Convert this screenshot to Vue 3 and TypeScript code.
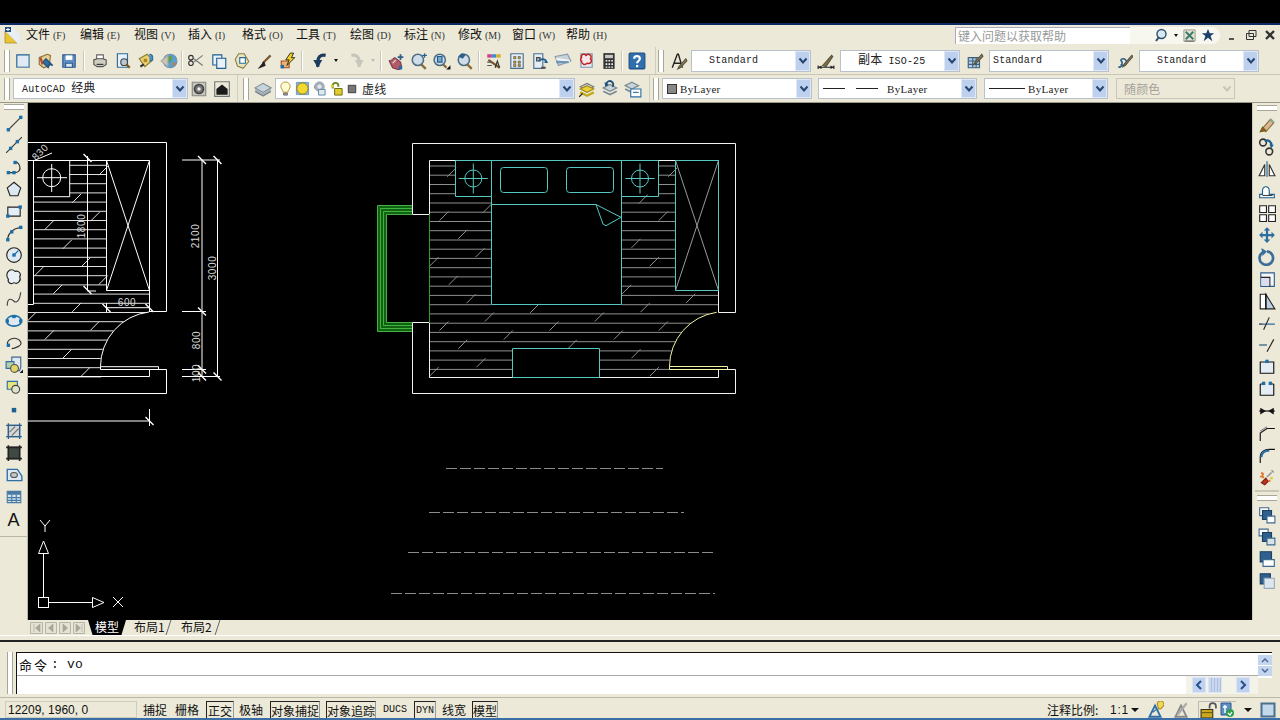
<script setup lang="ts">
interface Shape { d: string; f: string; s: string; w: number }
const P = (d: string, f = 'none', s = '#222', w = 1): Shape => ({ d, f, s, w })
const n = (x: number, y: number): Shape => P(`M${x - 1.5} ${y - 1.5}h3v3h-3z`, '#1b6ea8', 'none')
const BL = '#1d5f91'
const icons: Record<string, Shape[]> = {
  newf: [P('M2.5 2.5h11v11h-11z', '#dfeaf4', BL), P('M2.5 13.5h11v-11', 'none', '#7f9fb8')],
  open: [P('M2 5l7-3 3 1-1 9-5 2-4-3z', '#e6cf92', '#8a7340'), P('M8 6l-3 3 5 5 1-3 3 1z', '#2d6fa6', '#1d4f7a'), P('M3 5l2 6', 'none', '#b6492f', 2)],
  save: [P('M2.5 2.5h11v11h-11z', '#5f8fc4', '#2c5b8f'), P('M5 3h6v4H5z', '#fff', 'none'), P('M5 10h6v3.5H5z', '#dfe6ee', '#2c5b8f')],
  print: [P('M5 2.5h6v4H5z', '#fff', '#666'), P('M2.5 7l3-1h5l3 1v4l-3 2h-5l-3-2z', '#cfcdc2', '#555'), P('M5 11h6', 'none', '#333')],
  preview: [P('M3 1.5h9v12H3z', '#e8f0f8', '#2b6a9a'), P('M6 9a3 3 0 1 0 6 0a3 3 0 1 0-6 0', '#b8c8d4', '#444'), P('M11 11l3 3', 'none', '#7a5a20', 2)],
  publish: [P('M2 6l7-4 5 5-7 6z', '#ead070', '#8a7a30'), P('M6 6h3v3H6z', '#b08a20', 'none'), P('M11 2a3 3 0 1 1 0 6', '#4a8fc8', '#2d6fa6'), P('M3 13l3-2', 'none', '#333', 2)],
  globe: [P('M3 8a6 6 0 1 0 12 0a6 6 0 1 0-12 0', '#5b9fd0', '#6a8fb0'), P('M7 3l4 1-1 4-3 2-2-3z', '#5aa050', 'none'), P('M1 8l6-5v10z', '#c9c7ba', '#aaa'), P('M11 9l3 1-2 3z', '#d27a30', 'none')],
  cut: [P('M14 3L6 9M14 12L6 6', 'none', '#777'), P('M1.5 5a2 2 0 1 0 4 0a2 2 0 1 0-4 0M1.5 10a2 2 0 1 0 4 0a2 2 0 1 0-4 0', 'none', '#333')],
  copy: [P('M2.5 2.5h8v9h-8z', '#e8f0f8', BL), P('M6 5.5h8v9H6z', '#e8f0f8', BL)],
  paste: [P('M5 1.5l5 0 4 7-5 6-5-2-2-6z', '#e8e4c0', '#8a8040'), P('M6 5h5v5H6z', '#fff', '#2b6a9a')],
  brush: [P('M13 3L6 10', 'none', '#7a5a30', 2), P('M7 9l-4 5 5-2z', '#222', '#222')],
  block: [P('M2 8h7v6H2z', '#efb070', '#a05020'), P('M10 1L6 7h3l-2 5 7-7h-3l2-4z', '#f2d020', '#222', 0.8), n(3, 13)],
  undo: [P('M13 3C8 2 6 5 6 9v4', 'none', '#1d3c5c', 3), P('M2 7h8l-4 7z', '#1d3c5c', 'none')],
  redo: [P('M3 3c5-1 7 2 7 6v4', 'none', '#c6c6bc', 3), P('M14 7H6l4 7z', '#c6c6bc', 'none')],
  hand: [P('M2 8l5-3 5 4 1 4-2 3-6-2z', '#b25a68', '#7a3a4a'), P('M3 7l2-2M5 10l3-3', 'none', '#ddd'), P('M12 2v5M9.5 4.5h5', 'none', '#2d5f8a', 1.6), n(12, 14)],
  zoomp: [P('M2 7a5 5 0 1 0 10 0a5 5 0 1 0-10 0', '#cfdde8', '#4f6f86', 1.4), P('M10 11l4 4', 'none', '#8a6a3a', 2), P('M11 3h4M13 1v4', 'none', BL)],
  zoomw: [P('M1 7a5 5 0 1 0 10 0a5 5 0 1 0-10 0', '#cfdde8', '#4f6f86', 1.4), P('M4 4h4v5H4z', '#7ea6c6', BL), P('M9 11l3 3', 'none', '#8a6a3a', 2), P('M13 15h2v-2z', '#111', '#111')],
  zoomr: [P('M2 7a5 5 0 1 0 10 0a5 5 0 1 0-10 0', '#cfdde8', '#4f6f86', 1.4), P('M10 11l4 4', 'none', '#8a6a3a', 2), P('M2 4l3-3 4 1-3 4z', '#2d5f8a', 'none')],
  props: [P('M2 2h4v3H2z', '#d03a8a', 'none'), P('M6 2h4v3H6z', '#3a8ad0', 'none'), P('M10 2h4v3h-4z', '#d8b030', 'none'), P('M3 7l10 7', 'none', '#7a5a30', 2), P('M2 9h4M2 12h4', 'none', '#555'), P('M9 14l2-6 2 6', 'none', '#333')],
  grid: [P('M2.5 1.5h11v13h-11z', '#e6eef5', '#4a6f8f'), P('M5 4h2v2H5zM9 4h2v2H9zM5 8h2v2H5zM9 8h2v2H9zM5 11h2v2H5zM9 11h2v2H9z', '#c9a030', '#444', 0.5)],
  tools: [P('M2.5 1.5h8v13h-8z', '#e6eef5', '#4a6f8f'), P('M5 5h3v3H5z', '#bbb', '#444'), P('M7 8a4 4 0 0 1 7 1l-2 0', 'none', BL, 1.5), P('M9 13h4v2H9z', '#555', 'none')],
  sheets: [P('M1 4l11-2 3 6-11 4z', '#c4d2dc', '#8a9ba8'), P('M2 6l12 2', 'none', '#f4f4f4', 2), P('M2 9h11', 'none', '#6f97b5', 2)],
  markup: [P('M3.5 1.5h10v12h-10z', '#e8eef4', '#7b95ad'), P('M4 5c-1-3 3-4 4-2 2-2 6 0 4 3 2 2 0 5-3 4-2 2-5 1-5-2-1 0-1-2 0-3z', '#f4e8e8', '#c02020', 1.3)],
  calc: [P('M3 1h10v14H3z', '#333', 'none'), P('M4.5 2.5h7v3h-7z', '#c8c8c0', 'none'), P('M5 7h1.5v1.5H5zM7.5 7H9v1.5H7.5zM10 7h1.5v1.5H10zM5 10h1.5v1.5H5zM7.5 10H9v1.5H7.5zM10 10h1.5v1.5H10zM5 12.8h1.5v1.2H5zM7.5 12.8H9v1.2H7.5zM10 12.8h1.5v1.2H10z', '#eee', 'none')],
  help: [P('M2 1h12a1 1 0 0 1 1 1v12a1 1 0 0 1-1 1H2a1 1 0 0 1-1-1V2a1 1 0 0 1 1-1z', '#2f6fae', '#1c4f85'), P('M5.5 6c0-3 5-3 5 0 0 2-2.4 2-2.4 4M8.1 11.5v2', 'none', '#fff', 2)],
  txt: [P('M2 14L6.5 2h1L11 14M4 10h6', 'none', '#222', 1.2), P('M14 6l-6 7-1 2 2-1 6-6z', '#a08050', '#554')],
  dim: [P('M1 12v3M15 12v3M1 13.5h14', 'none', '#222'), P('M5 12l8-9 1 1-6 9z', '#8a6a40', '#554'), P('M1 13.5l3-1.5v3zM15 13.5l-3-1.5v3z', '#222', 'none')],
  table: [P('M2 5h10v9H2z', '#b8cfe2', '#3a5f80'), P('M2 8h10M2 11h10M6 5v9M9 5v9', 'none', '#3a5f80'), P('M14 2L8 9l-1 2 2-1 6-6z', '#a08050', '#554')],
  mlstyle: [P('M5 7a3 3 0 1 1 0 4M3 13c2 2 5-3 2-6', 'none', '#2a5f8a', 1.4), P('M15 3L8 11l-1 2 2-1 7-8z', '#a08050', '#554')],
  workspace: [P('M2 2h12v12H2z', '#c7c6bb', '#888'), P('M4 8a4 4 0 1 0 8 0a4 4 0 1 0-8 0', '#777', '#444', 1.5), P('M6.5 8a1.5 1.5 0 1 0 3 0a1.5 1.5 0 1 0-3 0', '#eee', 'none')],
  clean: [P('M1.5 1.5h13v13h-13z', 'none', '#777', 1), P('M3 8l5-4 5 4v5H3z', '#1a1a1a', 'none')],
  layers: [P('M1 7l7-4 7 4-7 4z', '#c8d4dc', '#7d8a94'), P('M1 10l7 4 7-4', 'none', '#7d8a94', 1.5), P('M1 8.5l7 4 7-4', 'none', '#9aa8b2')],
  bulb: [P('M3 6a5 5 0 1 1 10 0c0 2-2 3-2.5 6h-5C5 9 3 8 3 6z', '#fffbd0', '#b09030'), P('M6 13h4v2H6z', '#aaa', '#666')],
  sun: [P('M1.5 1.5h13v13h-13z', '#8cb6d6', '#6a9ac0'), P('M2 8a6 6 0 1 0 12 0a6 6 0 1 0-12 0', '#f4d832', '#8a7a20')],
  lockg: [P('M2 5h3v3H2z', '#aaa', 'none'), P('M3 6a5 5 0 1 1 10 0a5 5 0 1 1-10 0', '#b2b9c4', '#8e97a4'), P('M5 6a3 3 0 1 0 6 0a3 3 0 1 0-6 0', '#e4e8ee', '#8e97a4'), P('M7 9h7v6H7z', '#dfe8f0', '#5f88a8')],
  lock: [P('M4 8V5a3 3 0 0 1 6 0v1', 'none', '#6a8a20', 2), P('M6 8h8v7H6z', '#e0cc30', '#6a6a10'), P('M2 4h3v3H2z', '#e0cc30', 'none')],
  square: [P('M3 3h10v10H3z', '#777', '#222')],
  lstate: [P('M2 6l6-3 6 3-6 3z', '#dbe0e4', '#777'), P('M2 8l6 3 6-3-6-3z', '#eccf3a', '#a08a18'), P('M2 11l6 3 6-3', 'none', '#c4a820', 2), P('M1 15l3-3', 'none', '#222')],
  lprev: [P('M2 7l6-3 6 3-6 3z', '#c8d4dc', '#7d8a94'), P('M2 10l6 3 6-3', 'none', '#7d8a94', 1.5), P('M10 6a3 3 0 1 0-5-1', 'none', '#1d4f7a', 1.6), P('M3 2l1 4 3-2z', '#1d4f7a', 'none')],
  lprop: [P('M1 5l6-3 6 3-6 3z', '#c8d4dc', '#7d8a94'), P('M1 8l6 3', 'none', '#7d8a94', 1.5), P('M6 8h9v7H6z', '#fff', '#2d6fa6'), P('M8 11h5', 'none', '#2d6fa6')],
  line: [P('M3 14L14 3', 'none', '#444'), n(3, 14), n(14, 3)],
  xline: [P('M1 15L15 1', 'none', '#333'), n(5, 11), n(11, 5)],
  pline: [P('M2 13h6c5 0 6-3 5-6s-3-4-5-3', 'none', '#333'), n(3, 13), n(8, 13), n(9, 4)],
  poly: [P('M8 2l6 5-2.5 7h-7L2 7z', '#dce8f2', '#222')],
  rect: [P('M2.5 4.5h11v8h-11z', '#e4eef6', '#222'), n(2.5, 12.5), n(13.5, 4.5)],
  arc: [P('M2 14c1-6 5-10 12-11', 'none', '#333'), n(2.5, 14), n(14, 3), n(6, 7)],
  circle: [P('M1.5 8a6.5 6.5 0 1 0 13 0a6.5 6.5 0 1 0-13 0', '#dfe9f2', '#222'), P('M8 8l4-4', 'none', '#1b6ea8'), n(8, 8)],
  cloud: [P('M4 2c2-1 4 0 5 1 3-1 6 2 4 5 2 3-2 7-5 5-3 2-6 0-5-3-2-2-2-6 1-8z', '#e8eff5', '#222')],
  spline: [P('M2 14c0-8 4-6 6-4s5 0 6-8', 'none', '#444')],
  ellipse: [P('M1.5 8c0-6 13-6 13 0s-13 6-13 0z', '#dfe9f2', '#1b6ea8', 1.6), n(2, 8), n(14, 8), n(8, 4)],
  earc: [P('M3 11C0 6 6 3 10 4s6 5 2 7-5 2-6 2', 'none', '#333'), n(3, 10)],
  insert: [P('M6 1h8v9l-1 3H6z', '#dfe8f0', '#3f6a8f'), P('M1 5h7v6H1z', '#b7d0a8', '#2d6fa6'), P('M5 11a3.5 3.5 0 1 0 7 0a3.5 3.5 0 1 0-7 0', '#e4d46a', '#555'), P('M13 15h3v-3z', '#111', 'none')],
  mkblock: [P('M2 3h9v7H2z', '#e6e47c', '#2d6fa6'), P('M6 10a3.5 3.5 0 1 0 7 0a3.5 3.5 0 1 0-7 0', '#dfe2cc', '#444')],
  point: [P('M6 7h4v4H6z', BL, 'none')],
  hatch: [P('M3 3h10v10H3z', '#d7d7d7', '#2d5f8a'), P('M3 1v14M13 1v14M1 3h14M1 13h14', 'none', '#2d5f8a', 1.2), P('M4 9l5-5M6 12l6-6', 'none', '#777')],
  grad: [P('M3 3h10v10H3z', '#3e4a42', '#222'), P('M3 1v14M13 1v14M1 3h14M1 13h14', 'none', '#222', 1.4)],
  region: [P('M2 3h9l4 6v4H2z', '#dde8f1', '#2d6fa6', 1.2), P('M5 8c0-3 6-3 6 0s-6 3-6 0z', '#c3c6c4', '#555')],
  tbl: [P('M2 3h12v10H2z', '#d4e2ee', '#4a7ba3'), P('M2 3h12v3H2z', '#4a7ba3', 'none'), P('M2 8.5h12M2 11h12M6 6v7M10 6v7', 'none', '#4a7ba3')],
  erase: [P('M4 11l7-8 3 3-7 8z', '#d8b890', '#8a6a40'), P('M2 14l2-4 3 3z', '#c04040', '#661'), P('M11 3l3 3', 'none', '#8a8', 2)],
  copyo: [P('M1.5 4a3 3 0 1 0 6 0 3 3 0 1 0-6 0M7 12a3 3 0 1 0 6 0 3 3 0 1 0-6 0', 'none', '#333', 1.4), P('M6 3c3-2 6 0 6 4', 'none', BL, 2), P('M10 6h4l-2 3z', BL, 'none')],
  mirror: [P('M8 1v14', 'none', BL), P('M6 4v10H1zM10 4v10h5z', '#fff', '#333')],
  offset: [P('M1.5 14h13v-3H10V8c0-5-6-5-6 0v3H1.500z', '#fff', BL), P('M4 12h9', 'none', '#444')],
  array: [P('M1.500 1.500h6v6h-6zM9.500 1.500h6v6h-6zM1.500 9.500h6v6h-6zM9.500 9.500h6v6h-6z', '#fff', '#222')],
  move: [P('M8 1l3 3H9v3h3V5l3 3-3 3V9H9v3h2l-3 3-3-3h2V9H4v2L1 8l3-3v2h3V4H5z', '#2d6f9f', 'none')],
  rotate: [P('M4 4a6 6 0 1 0 4-1', 'none', '#3a6f9a', 2.4), P('M3 0l1 7 4-4z', '#3a6f9a', 'none')],
  scale: [P('M2.500 2.500h12v12h-12z', '#f4f6f8', '#2d5f8a'), P('M2.500 6.500h8v8', 'none', '#111', 1), P('M3 7h7v7H3z', '#dde', 'none')],
  stretch: [P('M2 2h5v13H2z', '#fff', '#222'), P('M7 2l8 13H7z', '#bcd0e0', '#222'), P('M7 2v13', 'none', '#111')],
  trim: [P('M1 9l14 0', 'none', BL), P('M5 14L10 3', 'none', '#222'), P('M1 9h3', 'none', '#555')],
  extend: [P('M1 8h7', 'none', '#1d4f7a'), P('M8 14L14 3', 'none', '#222')],
  brk: [P('M2 3.500h12v10H2z', '#e4edf4', '#111'), n(8, 3)],
  brk1: [P('M2 3.500h3M11 3.500h3M2 3.500v10h12v-10', '#e4edf4', '#111'), n(5, 3), n(11, 3)],
  join: [P('M1 8h14', 'none', '#111'), P('M2 5l5 3-5 3zM14 5L9 8l5 3z', '#111', 'none')],
  chamfer: [P('M2 15V8l6-4h7', 'none', '#111'), P('M2 6.500l6-4', 'none', '#888')],
  fillet: [P('M2 15V10c0-5 4-7 8-7h5', 'none', '#111'), P('M3 10c0-4 3-6 7-6', 'none', '#2d6fa6', 2)],
  explode: [P('M3 13l4-4 2 3-3 3z', '#c03020', '#7a2010'), P('M8 8l4-4M12 2l2 2', 'none', '#999', 1.5), P('M2 8l2-1 1 2M9 12l2-1M3 4l2 2', 'none', '#e07020', 1.6), P('M11 8h2v2h-2z', '#e8c020', 'none')],
  ord1: [P('M1.500 1.500h8v7h-8z', '#fff', '#3f6a8f'), P('M4 4h8v8H4z', '#2f5f8f', '#1c3f60'), P('M8 9h7v6H8z', '#fff', '#3f6a8f')],
  ord2: [P('M1 1h8v6H1z', '#fff', '#3f6a8f'), P('M4 4h8v8H4z', '#2f5f8f', '#1c3f60'), P('M8 9h7v6H8z', '#d8e0e8', '#3f6a8f')],
  ord3: [P('M2 1.500h10v9H2z', '#2f5f8f', '#1c3f60'), P('M4.500 8.500h10v6h-10z', '#fff', '#3f6a8f')],
  ord4: [P('M2 1.500h9v9H2z', '#2f5f8f', '#1c3f60'), P('M5.500 5.500h9v9h-9z', '#dde6ee', '#9ab')],
  mag: [P('M3 7a4.500 4.500 0 1 0 9 0a4.500 4.500 0 1 0-9 0', '#d8e8f2', '#2d4f6a', 1.4), P('M5 10l-3 4', 'none', '#2d4f6a', 2)],
  sat: [P('M2 2h12v12H2z', '#e4e2d2', '#9a9a8a'), P('M4 4l8 8M12 4l-8 8', 'none', '#3a7a6a', 2), P('M3 14h10', 'none', '#555')],
  star: [P('M8 1l2 5h5l-4 3 2 6-5-4-5 4 2-6-4-3h5z', '#1f3f6a', 'none')],
  anno: [P('M8 4l5 10H3z', 'none', '#2d6fa6', 1.6), P('M6 10l4-3', 'none', '#2d6fa6'), P('M10 2a3 3 0 1 1 5 3l-2 2h-2z', '#f0d850', '#b09030')],
  anno2: [P('M8 4l5 10H3z', 'none', '#888', 1.6), P('M5 12l8-10', 'none', '#aaa', 2)],
  lockgold: [P('M9 6V4a3 3 0 0 1 6 0v2', 'none', '#555', 1.6), P('M1 7h11v8H1z', '#c8a820', '#3a3010'), P('M1 10h11', 'none', '#6a5810')],
  toolcheck: [P('M2 1h10v12H2z', '#5f8fc0', '#2c5b8f'), P('M6 3v8M4 5h4', 'none', '#fff', 1.4), P('M7 11a4 4 0 1 0 8 0a4 4 0 1 0-8 0', '#2f9f4f', 'none'), P('M9 11l2 2 2-3', 'none', '#fff', 1.2)],
  clean2: [P('M1.500 1.500h13v13h-13z', '#c4d8ec', '#4a6f8f', 2)]
}

interface Item { k: 'i' | 's' | 'd' | 'c' | 'h'; w: number; name?: string; text?: string; pre?: string; post?: string; pad?: number; dis?: boolean; sample?: string }
const i = (name: string, w = 23): Item => ({ k: 'i', w, name })
const s = (w: number): Item => ({ k: 's', w })
const sp = (w: number): Item => ({ k: 'h', w })
const d = (g = false): Item => ({ k: 'd', w: 10, name: g ? 'g' : 'b' })
const c = (w: number, text: string, o: Partial<Item> = {}): Item => ({ k: 'c', w, text, ...o })

const row1a: Item[] = [i('newf'), i('open'), i('save'), s(8), i('print'), i('preview'), i('publish'), i('globe'), s(4),
  i('cut'), i('copy'), i('paste'), i('brush'), i('block'), s(6), sp(3), i('undo'), d(), sp(4), i('redo'), d(true), s(6),
  i('hand'), i('zoomp'), i('zoomw'), i('zoomr'), s(6), i('props'), i('grid'), i('tools'), i('sheets'), i('markup'), i('calc'), s(5), i('help')]
const row1b: Item[] = [i('txt', 24), c(120, 'Standard', { pad: 17 }), i('dim', 29), c(120, ' ISO-25', { pre: '副本', pad: 17 }), i('table', 29), c(120, 'Standard', { pad: 3 }), i('mlstyle', 30), c(120, 'Standard', { pad: 17 })]
const row2a: Item[] = [c(175, 'AutoCAD ', { post: '经典', pad: 8 }), i('workspace', 22), i('clean', 24)]
const row2c: Item[] = [i('lstate', 23), i('lprev', 23), i('lprop', 23)]
const row2d: Item[] = [c(150, 'ByLayer', { sample: 'sq', pad: 3 }), sp(6), c(159, 'ByLayer', { sample: 'dash', pad: 3 }), sp(7), c(124, 'ByLayer', { sample: 'line', pad: 3 }), sp(8), c(119, '随颜色', { dis: true, pad: 7 })]

const leftIcons = ['line', 'xline', 'pline', 'poly', 'rect', 'arc', 'circle', 'cloud', 'spline', 'ellipse', 'earc', 'insert', 'mkblock', 'point', 'hatch', 'grad', 'region', 'tbl']
const rightA = ['erase', 'copyo', 'mirror', 'offset', 'array', 'move', 'rotate', 'scale', 'stretch', 'trim', 'extend', 'brk', 'brk1', 'join', 'chamfer', 'fillet', 'explode']
const rightB = ['ord1', 'ord2', 'ord3', 'ord4']

const menus = [['文件', 'F'], ['编辑', 'E'], ['视图', 'V'], ['插入', 'I'], ['格式', 'O'], ['工具', 'T'], ['绘图', 'D'], ['标注', 'N'], ['修改', 'M'], ['窗口', 'W'], ['帮助', 'H']]
const statusBtns = [
  { t: '捕捉', w: 26, on: false, g: 6 }, { t: '栅格', w: 26, on: false, g: 6 }, { t: '正交', w: 28, on: true, g: 4 }, { t: '极轴', w: 26, on: false, g: 6 },
  { t: '对象捕捉', w: 50, on: true, g: 6 }, { t: '对象追踪', w: 50, on: true, g: 6 }, { t: 'DUCS', w: 26, on: false, g: 6 }, { t: 'DYN', w: 22, on: true, g: 5 },
  { t: '线宽', w: 26, on: false, g: 5 }, { t: '模型', w: 26, on: true, g: 0 }
]

// ---- drawing ----
const MID_YS = Array.from({ length: 23 }, (_, k) => 166 + k * 9.245)
const arcX = (y: number, cx: number): number => (y < 312.3 ? cx : cx + 5.7 - Math.sqrt(Math.max(0, 54.9 * 54.9 - (y - 366.7) ** 2)))
const mainHatch: string = MID_YS.map((y) => {
  const a = 429.5
  const segs: [number, number][] = []
  if (y < 197) segs.push([a, 455], [658.7, 675.5])
  else if (y < 304.7) segs.push([a, 491.5], [621.5, y < 290.5 ? 675.5 : 718.5])
  else if (y < 348.3) segs.push([a, arcX(y, 718.5)])
  else segs.push([a, 512.3], [599.7, arcX(y, 718.5)])
  return segs.map(([x1, x2]) => `M${x1} ${y.toFixed(1)}H${x2.toFixed(1)}`).join('')
}).join('')
const mainDiag: string = [[245, 112], [222, 243], [278, 298], [330, 353], [192, 380], [250, 436], [303, 491], [352, 220], [820, 192], [880, 243], [798, 325], [853, 380], [908, 112], [770, 463], [962, 490], [494, 520], [358, 546], [688, 546], [825, 518], [222, 573], [552, 573], [880, 573], [415, 600], [745, 600], [278, 628], [607, 628], [798, 656], [333, 683], [853, 710], [192, 710]]
  .map(([x, y]) => { const px = 370 + x / 3; const py = 135 + y / 3; return `M${(px - 4.5).toFixed(1)} ${(py + 4.5).toFixed(1)}l9-9` }).join('')

const LEFT_YS = Array.from({ length: 24 }, (_, k) => 165.3 + k * 9.2)
const leftHatch: string = LEFT_YS.map((y) => {
  if (y < 197) return `M69.7 ${y.toFixed(1)}H106.500`
  if (y < 290.3) return `M33.500 ${y.toFixed(1)}H106.500`
  if (y < 304.5) return `M33.500 ${y.toFixed(1)}H149.500`
  if (y < 312) return `M33.500 ${y.toFixed(1)}H149.500`
  const x = 154.9 - Math.sqrt(Math.max(0, 54.9 * 54.9 - (y - 366.7) ** 2))
  return `M28 ${y.toFixed(1)}H${x.toFixed(1)}`
}).join('')
const leftDiag: string = [[230, 280], [285, 335], [148, 360], [202, 418], [257, 472], [118, 498], [173, 553], [310, 197], [310, 525], [230, 607], [285, 662], [148, 690], [202, 746], [257, 800], [95, 635]]
  .map(([x, y]) => { const px = x / 3; const py = 105 + y / 3; return `M${(px - 4.500).toFixed(1)} ${(py + 4.500).toFixed(1)}l9-9` }).join('')
const ticks: string = [[87.5, 158], [87.5, 290], [106.5, 308], [149.5, 308], [202, 160], [217.5, 160], [202, 311.5], [202, 369.5], [202, 376.5], [217.5, 376.5], [149.5, 421]]
  .map(([x, y]) => `M${x - 4} ${y - 4}l8 8`).join('')
const dashes = [
  { y: 468.5, a: 446, b: 663 }, { y: 512.5, a: 429, b: 684 }, { y: 552.5, a: 408, b: 715 }, { y: 593.5, a: 391, b: 715 }
]
const lampM = [473.3, 640]
</script>

<template>
  <div class="app">
    <div class="topblack"></div>

    <div class="menubar">
      <svg class="appicon" viewBox="0 0 18 18" width="18" height="18">
        <path d="M1 17L1 5L13 17z" fill="#ecc430" stroke="#8a7a20" stroke-width=".6" />
        <path d="M1 1h7l8 8v8h-3L1 5z" fill="#e9eef2" />
        <path d="M1 1h6v5H1z" fill="#24507c" />
        <path d="M4 2v3M2 3.500h4" stroke="#fff" stroke-width="1" />
      </svg>
      <div v-for="m in menus" :key="m[0]" class="menu">{{ m[0] }}<span class="mk">({{ m[1] }})</span></div>
      <div class="spring"></div>
      <div class="searchbox">键入问题以获取帮助</div>
      <div class="searchbtns">
        <svg viewBox="0 0 16 16" width="16" height="16"><path v-for="(p, k) in icons.mag" :key="k" :d="p.d" :fill="p.f" :stroke="p.s" :stroke-width="p.w" /></svg>
        <span class="caret small"></span>
        <svg viewBox="0 0 16 16" width="15" height="15"><path v-for="(p, k) in icons.sat" :key="k" :d="p.d" :fill="p.f" :stroke="p.s" :stroke-width="p.w" /></svg>
        <svg viewBox="0 0 16 16" width="14" height="14"><path v-for="(p, k) in icons.star" :key="k" :d="p.d" :fill="p.f" :stroke="p.s" :stroke-width="p.w" /></svg>
      </div>
      <div class="winbtns">
        <svg viewBox="0 0 14 14" width="14" height="14"><path d="M4 10h5v2H4z" fill="#555" /></svg>
        <svg viewBox="0 0 14 14" width="14" height="14"><path d="M5 2.500h7v6H5zM2.500 5.500h7v6h-7z" fill="#ece9d8" stroke="#333" /></svg>
        <svg viewBox="0 0 14 14" width="14" height="14"><path d="M3 3l8 8M11 3l-8 8" stroke="#333" stroke-width="2.400" /></svg>
      </div>
    </div>

    <div class="tbrow r1">
      <div class="tb tb1a">
        <div class="grip"></div>
        <template v-for="(it, x) in row1a" :key="x">
          <div v-if="it.k === 'i'" class="ib" :style="{ width: it.w + 'px' }"><svg viewBox="0 0 16 16" width="18" height="18"><path v-for="(p, k) in icons[it.name!]" :key="k" :d="p.d" :fill="p.f" :stroke="p.s" :stroke-width="p.w" /></svg></div>
          <div v-else-if="it.k === 's'" class="sep" :style="{ width: it.w + 'px' }"></div>
          <div v-else-if="it.k === 'h'" :style="{ width: it.w + 'px' }"></div>
          <div v-else-if="it.k === 'd'" class="ib" :style="{ width: it.w + 'px' }"><span class="caret small" :class="{ grey: it.name === 'g' }"></span></div>
        </template>
      </div>
      <div class="tb tb1b">
        <div class="grip"></div>
        <template v-for="(it, x) in row1b" :key="x">
          <div v-if="it.k === 'i'" class="ib" :style="{ width: it.w + 'px' }"><svg viewBox="0 0 16 16" width="18" height="18"><path v-for="(p, k) in icons[it.name!]" :key="k" :d="p.d" :fill="p.f" :stroke="p.s" :stroke-width="p.w" /></svg></div>
          <div v-else class="combo tall" :style="{ width: it.w + 'px' }">
            <span class="ctext" :style="{ paddingLeft: it.pad + 'px' }"><span v-if="it.pre" class="cj">{{ it.pre }}</span>{{ it.text }}</span>
            <span class="cbtn"><svg viewBox="0 0 10 8" width="10" height="8"><path d="M1.500 1.500L5 5.500l3.500-4" fill="none" stroke="#26456e" stroke-width="2" /></svg></span>
          </div>
        </template>
      </div>
    </div>

    <div class="tbrow r2">
      <div class="tb tb2a">
        <div class="grip g2"></div>
        <template v-for="(it, x) in row2a" :key="x">
          <div v-if="it.k === 'i'" class="ib" :style="{ width: it.w + 'px' }"><svg viewBox="0 0 16 16" width="18" height="18"><path v-for="(p, k) in icons[it.name!]" :key="k" :d="p.d" :fill="p.f" :stroke="p.s" :stroke-width="p.w" /></svg></div>
          <div v-else class="combo" :style="{ width: it.w + 'px' }">
            <span class="ctext" :style="{ paddingLeft: it.pad + 'px' }">{{ it.text }}<span class="cj">{{ it.post }}</span></span>
            <span class="cbtn"><svg viewBox="0 0 10 8" width="10" height="8"><path d="M1.500 1.500L5 5.500l3.500-4" fill="none" stroke="#26456e" stroke-width="2" /></svg></span>
          </div>
        </template>
      </div>
      <div class="tb tb2b">
        <div class="grip g3"></div>
        <div class="ib w24"><svg viewBox="0 0 16 16" width="18" height="18"><path v-for="(p, k) in icons.layers" :key="k" :d="p.d" :fill="p.f" :stroke="p.s" :stroke-width="p.w" /></svg></div>
        <div class="combo layercombo">
          <span class="layericons">
            <svg v-for="nm in ['bulb', 'sun', 'lockg', 'lock', 'square']" :key="nm" viewBox="0 0 16 16" :width="nm === 'square' ? 12 : 15" :height="nm === 'square' ? 12 : 15"><path v-for="(p, k) in icons[nm]" :key="k" :d="p.d" :fill="p.f" :stroke="p.s" :stroke-width="p.w" /></svg>
          </span>
          <span class="ctext cjk">虚线</span>
          <span class="cbtn"><svg viewBox="0 0 10 8" width="10" height="8"><path d="M1.500 1.500L5 5.500l3.500-4" fill="none" stroke="#26456e" stroke-width="2" /></svg></span>
        </div>
        <div v-for="(it, x) in row2c" :key="x" class="ib" :style="{ width: it.w + 'px' }"><svg viewBox="0 0 16 16" width="18" height="18"><path v-for="(p, k) in icons[it.name!]" :key="k" :d="p.d" :fill="p.f" :stroke="p.s" :stroke-width="p.w" /></svg></div>
      </div>
      <div class="tb tb2d">
        <div class="grip g4"></div>
        <template v-for="(it, x) in row2d" :key="x">
          <div v-if="it.k === 'h'" :style="{ width: it.w + 'px' }"></div>
          <div v-else class="combo" :class="{ disabled: it.dis }" :style="{ width: it.w + 'px' }">
            <span v-if="it.sample === 'sq'" class="swatch"></span>
            <span v-if="it.sample === 'dash'" class="ls dash"></span>
            <span v-if="it.sample === 'line'" class="ls solid"></span>
            <span class="ctext" :class="{ cjk: it.dis, serif: it.sample }" :style="{ paddingLeft: it.pad + 'px' }">{{ it.text }}</span>
            <span class="cbtn" :class="{ off: it.dis }"><svg viewBox="0 0 10 8" width="10" height="8"><path d="M1.500 1.500L5 5.500l3.500-4" fill="none" :stroke="it.dis ? '#c8c6b8' : '#26456e'" stroke-width="2" /></svg></span>
          </div>
        </template>
      </div>
    </div>

    <div class="main">
      <div class="vtb left">
        <div class="hgrip gl"></div>
        <div v-for="nm in leftIcons" :key="nm" class="vi"><svg viewBox="0 0 16 16" width="18" height="18"><path v-for="(p, k) in icons[nm]" :key="k" :d="p.d" :fill="p.f" :stroke="p.s" :stroke-width="p.w" /></svg></div>
        <div class="vi bigA">A</div>
        <div class="endline"></div>
      </div>

      <svg class="canvas" viewBox="28 103 1224 517" width="1224" height="517">
        <!-- left partial plan -->
        <g fill="none">
          <path :d="leftHatch + leftDiag" stroke="#e0e0e0" />
          <path d="M28 142.500H166.500V311.500H149.500M28 160.500H149.500V312M33.500 160.500V304.500H28M28 393.500H166.500V369.500H149.500V376.500H28M106.500 160.500V290.500H149.500M106.500 160.500L149.500 290.500M149.500 160.500L106.500 290.500M33.500 160.500V196.700H69.700V160.500" stroke="#fff" />
          <path d="M149 312A54.900 54.900 0 0 0 100.500 366.700H158.500V369.500H100.500V366.700" stroke="#fff" />
          <path d="M37 177.700H67M51.700 164V192M42.700 177.700a9 9 0 1 0 18 0a9 9 0 1 0-18 0" stroke="#fff" />
          <path d="M87.500 156V291H96M106.500 303V312M149.500 303V312M106.500 307.700H149.500M33 161L52 153" stroke="#fff" />
          <path d="M182 160H220M202 160V377M217.500 160V377M182 311.500H206M182 369.500H206M182 376.500H220M28 421H150M149.500 409V426" stroke="#fff" />
          <path :d="ticks" stroke="#fff" stroke-width="1.400" />
        </g>
        <g class="dimtext">
          <text x="0" y="0" transform="translate(85 226) rotate(-90)" text-anchor="middle">1800</text>
          <text x="127" y="306" text-anchor="middle">600</text>
          <text x="0" y="0" transform="translate(199 236) rotate(-90)" text-anchor="middle">2100</text>
          <text x="0" y="0" transform="translate(216 268) rotate(-90)" text-anchor="middle">3000</text>
          <text x="0" y="0" transform="translate(200 340) rotate(-90)" text-anchor="middle">800</text>
          <text x="0" y="0" transform="translate(200 373) rotate(-90)" text-anchor="middle">100</text>
          <text x="0" y="0" transform="translate(36 161) rotate(-45)">830</text>
        </g>

        <!-- main plan -->
        <g fill="none">
          <path :d="mainHatch + mainDiag" stroke="#8f8f8f" />
          <path d="M412.500 214.500V143.500H735.500V312.500H718.500M412.500 214.500H429.500M412.500 322.500H429.500M412.500 322.500V393.500H735.500V369.500H718.500V377.500H429.500V322.500M429.500 214.500V160.500H675.500M429.500 377.500H512M718.500 160.500V312.500" stroke="#f2f2f2" />
          <path d="M429.500 214V323" stroke="#2f9a2f" />
          <path d="M412 210H382V327H412" stroke="#0e640e" stroke-width="9" />
          <path d="M412 205.500H377.500V331.500H412M412 208.500H380.500V328.500H412M412 211.500H383.500V325.500H412M412 214.500H386.500V322.500H412" stroke="#46b046" />
          <path d="M716.700 312.300A54.900 54.900 0 0 0 669.500 366.500H727.500V369.500H669.500V366.500" stroke="#f4f4a4" />
          <path d="M675.500 160.500L718.500 290.500M718.500 160.500L675.500 290.500" stroke="#9a9a9a" />
          <path d="M675.500 160.500H718.500V290.500H675.500z" stroke="#56c8c0" />
          <path d="M455.500 160.500H658.500V196.500H621.500V304.500H491.500V196.500H455.500zM491.500 160.500V196.500M621.500 160.500V196.500M491.500 204.500H596L621 217.300L606 225.700L603 224L596 204.500M512.500 348.500H599.500V377.500H512.500z" stroke="#56c8c0" />
          <rect x="500.500" y="167.500" width="47" height="25" rx="3" stroke="#56c8c0" />
          <rect x="566.500" y="167.500" width="47" height="25" rx="3" stroke="#56c8c0" />
          <g v-for="x in lampM" :key="x" stroke="#56c8c0">
            <circle :cx="x" cy="178.500" r="8.500" />
            <path :d="`M${x - 14.500} 178.500H${x + 14.500}M${x} 163.500V193.500`" />
          </g>
        </g>

        <!-- dashed rows -->
        <path v-for="l in dashes" :key="l.y" :d="`M${l.a} ${l.y}H${l.b}`" fill="none" stroke="#8c8c8c" stroke-dasharray="11 3" />

        <!-- UCS -->
        <g fill="none" stroke="#fff">
          <rect x="38.500" y="597.500" width="10" height="10" />
          <path d="M43.500 597V553M38.500 553.500H48.500L43.500 541zM48.500 602.500H93M92.500 597.500V607.500L104 602.500z" />
          <path d="M40 520L45 526L50 520M45 526V532" />
          <path d="M113 597L123 607M123 597L113 607" />
        </g>
      </svg>

      <div class="vtb right">
        <div class="hgrip gr"></div>
        <div v-for="nm in rightA" :key="nm" class="vi"><svg viewBox="0 0 16 16" width="18" height="18"><path v-for="(p, k) in icons[nm]" :key="k" :d="p.d" :fill="p.f" :stroke="p.s" :stroke-width="p.w" /></svg></div>
        <div class="hsep"></div>
        <div class="hgrip g2nd"></div>
        <div v-for="nm in rightB" :key="nm" class="vi"><svg viewBox="0 0 16 16" width="18" height="18"><path v-for="(p, k) in icons[nm]" :key="k" :d="p.d" :fill="p.f" :stroke="p.s" :stroke-width="p.w" /></svg></div>
      </div>
    </div>

    <div class="tabs">
      <div class="navs">
        <svg viewBox="0 0 60 14" width="60" height="14">
          <path d="M2.500 1.500h12v11h-12zM17.500 1.500h11v11h-11zM31.500 1.500h11v11h-11zM45.500 1.500h11v11h-11z" fill="#e4e2d2" stroke="#b7b5a6" />
          <path d="M6 3v8M12 3L7.500 7l4.500 4zM25 3l-4.500 4 4.500 4zM35 3l4.500 4-4.500 4zM48 3l4.500 4-4.500 4zM54 3v8" fill="#a7a698" stroke="#a7a698" stroke-width=".6" />
        </svg>
      </div>
      <div class="tab on">模型</div>
      <div class="tab t2">布局1</div>
      <div class="tab t3">布局2</div>
    </div>

    <div class="cmdgap"></div>
    <div class="cmd">
      <div class="cgrip"></div>
      <div class="cbody">
        <div class="cline"><span class="prompt"><span class="pcj">命令</span><span class="pcolon">:</span>vo</span></div>
        <div class="cline2">
          <span class="hsb">
            <span class="sbtn"><svg viewBox="0 0 8 10" width="8" height="10"><path d="M6 1L2 5l4 4" fill="none" stroke="#28508a" stroke-width="2" /></svg></span>
            <span class="sthumb"></span>
            <span class="sbtn"><svg viewBox="0 0 8 10" width="8" height="10"><path d="M2 1l4 4-4 4" fill="none" stroke="#28508a" stroke-width="2" /></svg></span>
          </span>
        </div>
      </div>
      <div class="vsb">
        <span class="vbtn"><svg viewBox="0 0 10 6" width="10" height="6"><path d="M2 5l3-3 3 3" fill="none" stroke="#4a6690" stroke-width="1.400" /></svg></span>
        <span class="vbtn"><svg viewBox="0 0 10 6" width="10" height="6"><path d="M2 1l3 3 3-3" fill="none" stroke="#4a6690" stroke-width="1.400" /></svg></span>
      </div>
    </div>

    <div class="status">
      <div class="coords">12209, 1960, 0</div>
      <div v-for="b in statusBtns" :key="b.t" class="sb" :class="{ on: b.on, lat: b.t === 'DUCS' || b.t === 'DYN' }" :style="{ width: b.w + 'px', marginRight: b.g + 'px' }">{{ b.t }}</div>
      <div class="spring"></div>
      <div class="scale">注释比例:</div>
      <div class="ratio">1:1</div>
      <span class="caret"></span>
      <div class="sticons">
        <svg viewBox="0 0 16 16" width="18" height="18"><path v-for="(p, k) in icons.anno" :key="k" :d="p.d" :fill="p.f" :stroke="p.s" :stroke-width="p.w" /></svg>
        <svg viewBox="0 0 16 16" width="18" height="18"><path v-for="(p, k) in icons.anno2" :key="k" :d="p.d" :fill="p.f" :stroke="p.s" :stroke-width="p.w" /></svg>
        <span class="trayg">
          <svg viewBox="0 0 16 16" width="17" height="17"><path v-for="(p, k) in icons.lockgold" :key="k" :d="p.d" :fill="p.f" :stroke="p.s" :stroke-width="p.w" /></svg>
          <svg viewBox="0 0 16 16" width="16" height="16"><path v-for="(p, k) in icons.toolcheck" :key="k" :d="p.d" :fill="p.f" :stroke="p.s" :stroke-width="p.w" /></svg>
        </span>
        <span class="caret"></span>
        <svg viewBox="0 0 16 16" width="16" height="16"><path v-for="(p, k) in icons.clean2" :key="k" :d="p.d" :fill="p.f" :stroke="p.s" :stroke-width="p.w" /></svg>
      </div>
    </div>
    <div class="bluebar"></div>
  </div>
</template>

<style>
html, body { margin: 0; padding: 0; background: #000; }
</style>

<style scoped>
.app {
  width: 1280px; height: 720px; display: flex; flex-direction: column; overflow: hidden;
  background: #ece9d8; color: #111;
  font-family: "Noto Sans CJK SC", "Liberation Sans", sans-serif; font-size: 12px;
}
.topblack { height: 23px; background: #000; border-bottom: 2px solid #0a2a66; flex: none; }
.menubar { height: 22px; flex: none; display: flex; align-items: center; background: #ece9d8; padding-bottom: 2px; box-sizing: border-box; }
.appicon { margin-left: 4px; margin-right: 4px; flex: none; }
.menu { width: 54px; flex: none; font-size: 12px; line-height: 16px; white-space: nowrap; }
.mk { font-family: "Liberation Serif", serif; font-size: 10px; margin-left: 3px; color: #333; }
.spring { flex: 1; }
.searchbox {
  width: 175px; height: 17px; line-height: 15px; background: #fff; border-left: 1px solid #aab; border-top: 1px solid #aab;
  color: #999; font-size: 12px; padding-left: 2px; box-sizing: border-box; flex: none; white-space: nowrap;
}
.searchbtns { display: flex; align-items: center; gap: 4px; height: 17px; padding: 0 2px 0 24px; background: #f7f6ef; border-radius: 0 8px 8px 0; width: 90px; box-sizing: border-box; flex: none; }
.winbtns { display: flex; align-items: center; gap: 5px; width: 60px; padding-left: 5px; box-sizing: border-box; flex: none; }
.caret { display: inline-block; width: 0; height: 0; border-left: 4px solid transparent; border-right: 4px solid transparent; border-top: 4px solid #111; flex: none; }
.caret.small { border-left-width: 2.500px; border-right-width: 2.500px; border-top-width: 3px; }
.caret.grey { border-top-color: #bbb; }

.tbrow { flex: none; display: flex; align-items: stretch; height: 28px; box-sizing: border-box; }
.r1 { height: 28px; border-bottom: 1px solid #c8c6b6; }
.r2 { height: 28px; border-bottom: 1px solid #9a9888; background: #ece9d8; }
.tb { display: flex; align-items: center; height: 100%; flex: none; box-sizing: border-box; }
.tb1a { width: 656px; border-right: 1px solid #d0cebe; padding-left: 4px; }
.tb1b { padding-left: 2px; }
.tb2a { width: 238px; padding-left: 4px; border-right: 1px solid #d0cebe; }
.tb2b { width: 412px; padding-left: 5px; border-right: 1px solid #d0cebe; }
.tb2d { padding-left: 3px; }
.grip { width: 4px; margin-right: 1px; height: 22px; border-left: 1px solid #a8a696; border-right: 1px solid #a8a696; background: #fff; flex: none; box-sizing: content-box; }
.g2 { margin-right: 3px; }
.g3 { margin-right: 2px; }
.g4 { margin-right: 3px; }
.tb1b .grip { margin-right: 3px; }
.ib { height: 22px; display: flex; align-items: center; justify-content: center; flex: none; }
.w24 { width: 24px; }
.sep { height: 20px; flex: none; background: linear-gradient(to right, transparent calc(50% - 1px), #c9c7b7 calc(50% - 1px), #c9c7b7 50%, #fff 50%, #fff calc(50% + 1px), transparent calc(50% + 1px)); }
.combo { height: 21px; display: flex; align-items: center; background: #fff; border: 1px solid #b9c2cb; box-sizing: border-box; flex: none; font-family: "Liberation Mono", "Noto Sans CJK SC", monospace; font-size: 10px; letter-spacing: .15px; color: #222; }
.combo.tall { height: 22px; }
.ctext { flex: 1; white-space: pre; overflow: hidden; line-height: 16px; }
.cj { font-family: "Noto Sans CJK SC", sans-serif; font-size: 12px; }
.ctext.serif { font-family: "Liberation Serif", "Noto Sans CJK SC", serif; font-size: 11px; letter-spacing: .3px; }
.ctext.cjk { font-family: "Noto Sans CJK SC", sans-serif; font-size: 12px; padding-left: 4px; }
.cbtn { width: 15px; height: 100%; background: #bdd0ee; border: 1px solid #dfe8f6; box-sizing: border-box; display: flex; align-items: center; justify-content: center; flex: none; }
.cbtn.off { background: #ece9d8; border-color: #ece9d8; }
.combo.disabled { background: #ece9d8; border-color: #c8c6b8; color: #a5a398; }
.layercombo { width: 300px; }
.layericons { display: flex; align-items: center; gap: 2px; padding-left: 2px; flex: none; }
.swatch { width: 10px; height: 10px; background: #888; border: 1px solid #333; margin-left: 4px; box-sizing: border-box; flex: none; }
.ls { flex: none; margin-left: 4px; height: 1px; }
.ls.dash { width: 55px; background: linear-gradient(to right, #222 0 22px, transparent 22px 33px, #222 33px 55px); margin-right: 6px; }
.ls.solid { width: 36px; background: #222; }

.main { flex: 1; min-height: 0; display: flex; background: #000; }
.vtb { width: 28px; flex: none; background: #ece9d8; display: flex; flex-direction: column; align-items: center; }
.vtb.left { border-right: 1px solid #b8b6a6; box-sizing: border-box; }
.vtb.right { border-left: 1px solid #d0cebe; box-sizing: border-box; }
.hgrip { width: 20px; height: 4px; border-top: 1px solid #a8a696; border-bottom: 1px solid #a8a696; background: #fff; flex: none; }
.hgrip.gl { margin: 1px 0 2px; }
.hgrip.gr { margin: 2px 0 3px; }
.hgrip.g2nd { margin: 3px 0 3px; }
.vi { height: 22px; width: 100%; display: flex; align-items: center; justify-content: center; flex: none; }
.bigA { font-family: "Liberation Sans", sans-serif; font-size: 18px; height: 24px; }
.endline { width: 100%; height: 1px; background: #b8b6a6; margin-top: 4px; flex: none; }
.hsep { width: 24px; height: 2px; background: #c9c7b7; margin-top: 2px; flex: none; }
.canvas { display: block; flex: none; background: #000; }
.dimtext { font-family: "Liberation Sans", sans-serif; font-size: 10px; fill: #dcdcdc; letter-spacing: .6px; }

.tabs { height: 15px; flex: none; display: flex; align-items: center; padding-left: 28px; background: #ece9d8; box-sizing: border-box; }
.navs { width: 60px; display: flex; flex: none; }
.tab { height: 15px; line-height: 14px; font-size: 12px; flex: none; white-space: nowrap; box-sizing: border-box; position: relative; }
.tab.t2 { width: 44px; padding-left: 6px; }
.tab.t3 { width: 49px; padding-left: 9px; }
.tab.t2::after, .tab.t3::after { content: ""; position: absolute; right: 3px; top: 0; height: 15px; width: 0; border-right: 1px solid #666; transform: skewX(-18deg); }
.tab.on { background: #000; color: #fff; width: 38px; clip-path: polygon(0 0, 100% 0, 88% 100%, 12% 100%); text-align: center; margin-right: 2px; }
.cmdgap { height: 4px; flex: none; border-top: 1px solid #fff; border-bottom: 2px solid #222; box-sizing: content-box; background: #ece9d8; }

.cmd { height: 55px; flex: none; display: flex; padding: 10px 8px 0 7px; box-sizing: border-box; background: #ece9d8; }
.cgrip { width: 4px; height: 42px; border-left: 1px solid #a8a696; border-right: 1px solid #a8a696; background: #fff; margin-right: 3px; flex: none; }
.cbody { flex: 1; background: #fff; border-top: 1px solid #111; border-left: 1px solid #111; display: flex; flex-direction: column; height: 42px; box-sizing: border-box; }
.cline { height: 23px; border-bottom: 1px solid #aaa; padding-left: 2px; flex: none; box-sizing: border-box; display: flex; align-items: center; }
.prompt { font-family: "Liberation Mono", "Noto Sans CJK SC", monospace; font-size: 13px; display: flex; align-items: center; letter-spacing: .2px; }
.pcj { font-family: "Noto Sans CJK SC", sans-serif; font-size: 13px; letter-spacing: 2px; }
.pcolon { margin: 0 8px 0 2px; }
.cline2 { flex: 1; display: flex; justify-content: flex-end; align-items: center; }
.hsb { display: flex; width: 72px; height: 18px; background: #f4f3ea; padding: 1px 8px 1px 6px; gap: 2px; justify-content: space-between; box-sizing: border-box; }
.sbtn { width: 14px; background: #c0d2f0; border: 1px solid #dbe5f6; box-sizing: border-box; display: flex; align-items: center; justify-content: center; }
.sthumb { width: 14px; background: repeating-linear-gradient(to right, #c8d6ee 0 2px, #aebfe0 2px 3px); border: 1px solid #dbe5f6; box-sizing: border-box; margin-right: auto; }
.vsb { width: 14px; display: flex; flex-direction: column; gap: 1px; background: #fff; height: 26px; padding: 2px 0 0; flex: none; box-sizing: border-box; border-top: 1px solid #111; }
.vbtn { height: 10px; width: 14px; background: #c4d5f0; display: flex; align-items: center; justify-content: center; flex: none; }

.status { height: 21px; flex: none; display: flex; align-items: center; padding: 3px 0 0 5px; background: #ece9d8; border-top: 1px solid #bab8a8; box-sizing: border-box; }
.coords { width: 132px; height: 17px; line-height: 16px; font-family: "Liberation Sans", sans-serif; font-size: 12px; border: 1px solid #cfcdbd; box-sizing: border-box; padding-left: 2px; margin-right: 5px; flex: none; white-space: pre; }
.sb { height: 18px; line-height: 18px; text-align: center; font-size: 12px; flex: none; white-space: nowrap; box-sizing: border-box; }
.sb.lat { font-family: "Liberation Mono", monospace; font-size: 10px; }
.sb.on { border-top: 1px solid #222; border-left: 1px solid #222; border-right: 1px solid #999; line-height: 17px; }
.scale { width: 63px; flex: none; font-size: 12px; }
.ratio { width: 21px; font-size: 12px; flex: none; font-family: "Liberation Sans", sans-serif; letter-spacing: .8px; }
.sticons { display: flex; align-items: center; margin-left: 7px; gap: 8px; padding-right: 4px; flex: none; }
.trayg { display: flex; align-items: center; gap: 2px; border-top: 1px solid #bbb; border-left: 1px solid #bbb; padding: 0 1px; }
.bluebar { height: 2px; flex: none; background: #3a6ea5; }
</style>
